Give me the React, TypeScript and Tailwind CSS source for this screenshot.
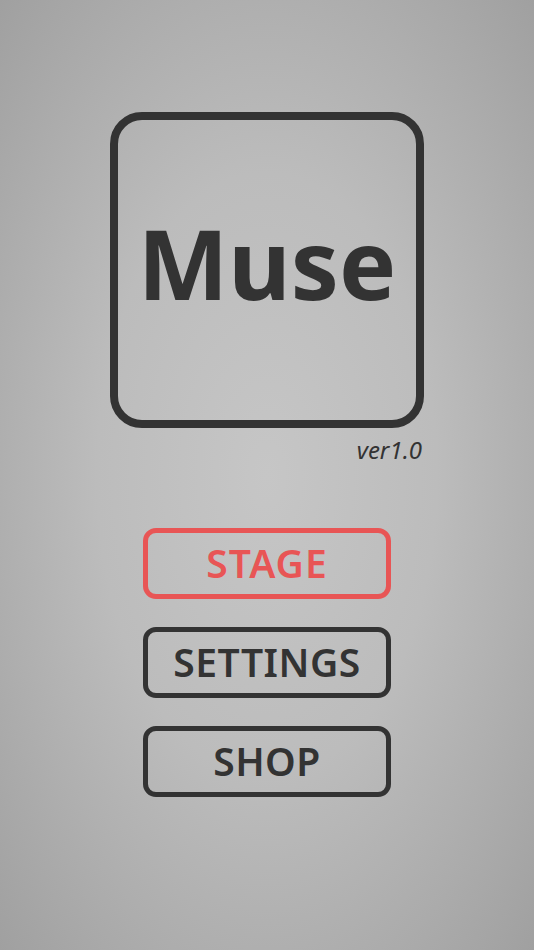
import { FC } from 'react';

const MenuButton: FC<{ label: string; active?: boolean }> = ({ label, active }) =>
{
    return (
        <button
            className={ active
                ? 'flex h-[71px] w-[248px] items-center justify-center rounded-[13px] border-[5px] border-[#e85555] text-[39px] font-semibold tracking-[1px] text-[#e85555]'
                : 'flex h-[71px] w-[248px] items-center justify-center rounded-[13px] border-[5px] border-[#333333] text-[39px] font-semibold tracking-[0.5px] text-[#333333]' }
        >
            { label }
        </button>
    );
};

export default function App()
{
    return (
        <div className="flex h-[950px] w-[534px] flex-col items-center bg-[radial-gradient(ellipse_at_center,#c6c6c6_0%,#bcbcbc_45%,#a0a0a0_100%)] font-['Noto_Sans',sans-serif]">
            <div className="mt-[112px] flex h-[316px] w-[314px] items-center justify-center rounded-[32px] border-[8px] border-[#333333]">
                <span className="mt-[-14px] text-[96px] font-bold leading-none text-[#333333]">Muse</span>
            </div>
            <div className="flex w-[314px] justify-end pr-[2px] pt-[10px]">
                <span className="text-[24px] italic leading-none text-[#333333]">ver1.0</span>
            </div>
            <div className="mt-[66px] flex flex-col gap-[28px]">
                <MenuButton label="STAGE" active />
                <MenuButton label="SETTINGS" />
                <MenuButton label="SHOP" />
            </div>
        </div>
    );
}
